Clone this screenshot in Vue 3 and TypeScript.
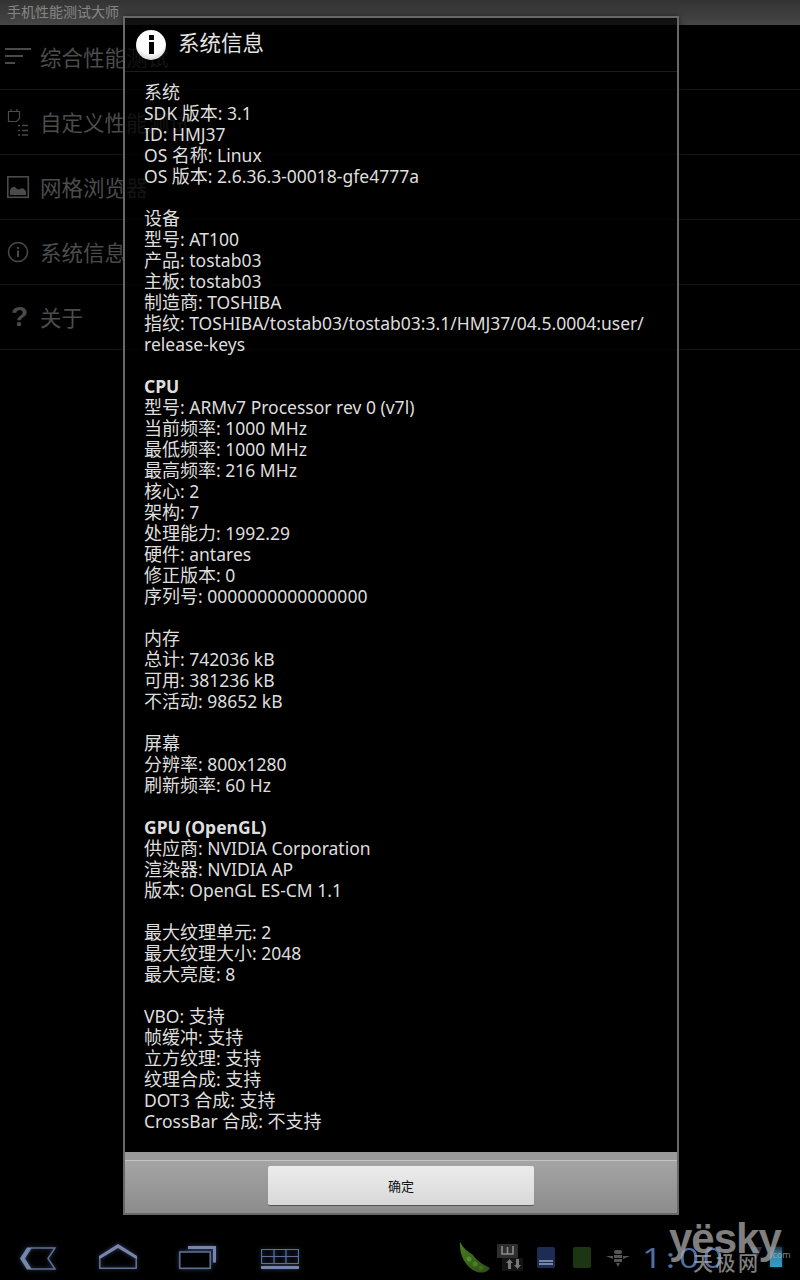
<script setup lang="ts">
interface Part { s: string; c: boolean }
interface Line { parts: Part[]; b: boolean }
const raw: string[] = [
  '系统','SDK 版本: 3.1','ID: HMJ37','OS 名称: Linux','OS 版本: 2.6.36.3-00018-gfe4777a','',
  '设备','型号: AT100','产品: tostab03','主板: tostab03','制造商: TOSHIBA','指纹: TOSHIBA/tostab03/tostab03:3.1/HMJ37/04.5.0004:user/','release-keys','',
  '*CPU','型号: ARMv7 Processor rev 0 (v7l)','当前频率: 1000 MHz','最低频率: 1000 MHz','最高频率: 216 MHz','核心: 2','架构: 7','处理能力: 1992.29','硬件: antares','修正版本: 0','序列号: 0000000000000000','',
  '内存','总计: 742036 kB','可用: 381236 kB','不活动: 98652 kB','',
  '屏幕','分辨率: 800x1280','刷新频率: 60 Hz','',
  '*GPU (OpenGL)','供应商: NVIDIA Corporation','渲染器: NVIDIA AP','版本: OpenGL ES-CM 1.1','',
  '最大纹理单元: 2','最大纹理大小: 2048','最大亮度: 8','',
  'VBO: 支持','帧缓冲: 支持','立方纹理: 支持','纹理合成: 支持','DOT3 合成: 支持','CrossBar 合成: 不支持'
]
function toLine(src: string): Line {
  const b = src.startsWith('*')
  const text = b ? src.slice(1) : src
  const chunks = text.match(/[\u4e00-\u9fff]+|[^\u4e00-\u9fff]+/g) ?? ['\u00a0']
  return { b, parts: chunks.map(s => ({ s, c: /[\u4e00-\u9fff]/.test(s) })) }
}
const lines: Line[] = raw.map(toLine)
const menu = ['综合性能测试','自定义性能测试','网格浏览器','系统信息','关于']
</script>

<template>
  <div class="screen">
    <div class="titlebar">手机性能测试大师</div>
    <ul class="menu">
      <li v-for="(m, i) in menu" :key="m" class="row">
        <span class="ico">
          <svg v-if="i === 0" width="30" height="20" viewBox="0 0 30 20" fill="#4a4a4a"><rect x="0" y="1" width="26" height="2"/><rect x="0" y="8" width="18" height="2"/><rect x="0" y="15" width="10" height="2"/></svg>
          <svg v-else-if="i === 1" width="30" height="30" viewBox="0 0 30 30" fill="none" stroke="#4a4a4a"><path d="M3.500 4.500h11v7l-3 3h-8zM6 2v2.500M12 2v2.500" stroke-width="1.200"/><path d="M13 18.500h2M17 18.500h6M13 23.500h2M17 23.500h6M13 28h2M17 28h6" stroke-width="1.500"/></svg>
          <svg v-else-if="i === 2" width="24" height="24" viewBox="0 0 24 24" class="ico-s"><rect x=".8" y="1.800" width="20.500" height="20.500" fill="none" stroke="#4a4a4a" stroke-width="1.600"/><path d="M3 20v-5c2-3.500 4-4 6-2s3 1.500 5 .5 4 1 5 3v3.500z" fill="#4a4a4a"/></svg>
          <svg v-else-if="i === 3" width="24" height="24" viewBox="0 0 24 24" fill="none" stroke="#4a4a4a" stroke-width="1.500" class="ico-s"><circle cx="11" cy="12" r="9.500"/><path d="M11 10.500v6.500M11 7v2" stroke-width="2"/></svg>
          <span v-else class="q">?</span>
        </span>
        <span class="label">{{ m }}</span>
      </li>
    </ul>

    <div class="dialog">
      <header class="dlg-head">
        <span class="info-badge"><i class="dot"></i><i class="stem"></i></span>
        <h1>系统信息</h1>
      </header>
      <div class="dlg-body">
        <div v-for="(l, i) in lines" :key="i" class="ln" :class="{ bold: l.b }"><span v-for="(p, j) in l.parts" :key="j" :class="{ cjk: p.c }">{{ p.s }}</span></div>
      </div>
      <div class="dlg-strip"></div>
      <footer class="dlg-foot">
        <button class="ok">确定</button>
      </footer>
    </div>

    <nav class="navbar">
      <div class="nav-left">
        <svg width="38" height="23" viewBox="0 0 38 23" fill="none" class="glow"><path d="M8 .5L1 11.500l7 11h5L6 11.500l7-11z" fill="#7586ae"/><path d="M12 1h24l-7 10.500 7 10.500H12" stroke="#5f7098" stroke-width="1.500"/></svg>
        <svg width="38" height="25" viewBox="0 0 38 25" fill="none" class="glow home"><path d="M0 12L19 0l19 12v3.500L19 4 0 15.500z" fill="#7586ae"/><path d="M.8 15v9.200h36.400V15" stroke="#5f7098" stroke-width="1.500"/></svg>
        <svg width="37" height="23" viewBox="0 0 37 23" fill="none" class="glow recent"><path d="M9 1.500h26.500v15" stroke="#7586ae" stroke-width="3"/><path d="M.8 6h30.400v16.200H.8z" fill="#000" stroke="#5f7098" stroke-width="1.500"/></svg>
        <svg width="38" height="20" viewBox="0 0 38 20" fill="none" class="glow grid"><path d="M.5.500h37v14H.5zM.5 7.500h37M13 .5v14M25 .5v14" stroke="#5f7098" stroke-width="1.200"/><rect y="17" width="38" height="3" fill="#7586ae"/></svg>
      </div>
      <div class="nav-right">
        <svg width="33" height="33" viewBox="0 0 33 33" class="pea">
          <defs><linearGradient id="podfill" x1="0" y1="0" x2="1" y2="1"><stop offset="0" stop-color="#4a7d25"/><stop offset="1" stop-color="#2a4c14"/></linearGradient></defs>
          <path d="M2 1C1 12 6 26 19 31c6 1.500 11 0 13-4-6-3-13-7-17-13C10 11 5 7 2 1z" fill="url(#podfill)"/>
          <circle cx="11" cy="18" r="2.500" fill="#558c2c"/><circle cx="17" cy="23" r="2.500" fill="#4a7d25"/><circle cx="23" cy="27" r="2.200" fill="#3f6b1f"/>
        </svg>
        <svg width="26" height="27" viewBox="0 0 26 27" class="usb"><rect x="0" y="0" width="21" height="14" rx="1" fill="#2e2e2e"/><rect x="5" y="14" width="21" height="13" rx="1" fill="#141414"/><path d="M5 2v8h11V2M10.500 3v7" fill="none" stroke="#8a8a8a" stroke-width="1.600"/><path d="M11 25v-6H9l3.500-4 3.500 4h-2v6zM19 15v6h-2l3.500 4 3.500-4h-2v-6z" fill="#777"/></svg>
        <span class="sd blue"><i></i><i></i></span>
        <span class="sd green"></span>
        <svg width="24" height="20" viewBox="0 0 24 20" class="bug" fill="#555"><rect x="8" y="2" width="8" height="4" rx="2"/><rect x="8" y="7" width="8" height="3"/><rect x="8" y="11" width="8" height="3"/><path d="M10 15h4l-2 4zM0 8h7v3zM24 8h-7v3zM9 2L8 0M15 2l1-2"/></svg>
        <span class="clock">1:00</span>
        <span class="wifi"></span>
        <span class="batt"></span>
      </div>
    </nav>

    <div class="mark">
      <span class="mark-en">yësky</span>
      <span class="mark-cn">天极网</span>
      <span class="mark-com">.com</span>
    </div>
  </div>
</template>

<style>
html, body { margin: 0; background: #000; }
</style>

<style scoped>
.screen {
  position: relative;
  width: 800px;
  height: 1280px;
  overflow: hidden;
  background: #000;
  font-family: "Noto Sans", "Noto Sans CJK SC", sans-serif;
  display: flex;
  flex-direction: column;
}
.titlebar {
  height: 25px;
  box-sizing: border-box;
  padding-left: 7px;
  font-size: 14px;
  line-height: 24px;
  color: #868686;
  background: linear-gradient(#333, #464646);
}
.menu { list-style: none; margin: 0; padding: 0; }
.row {
  height: 64px;
  border-bottom: 1px solid #161616;
  display: flex;
  align-items: center;
  padding-left: 5px;
  gap: 6px;
}
.ico { width: 30px; display: flex; align-items: center; justify-content: flex-start; }
.ico-s { margin-left: 2px; }
.q { font: bold 28px "Liberation Sans", sans-serif; color: #4a4a4a; margin-left: 6px; }
.label { font-size: 21.500px; color: #4c4c4c; margin: -2px 0 0 -1px; }

.dialog {
  position: absolute;
  left: 123px;
  top: 16px;
  width: 556px;
  height: 1199px;
  box-sizing: border-box;
  border: 2px solid #686868;
  background: rgba(0, 0, 0, .75);
  box-shadow: 0 0 6px rgba(0,0,0,.5);
  display: flex;
  flex-direction: column;
}
.dlg-head {
  height: 54px;
  flex: none;
  box-sizing: border-box;
  border-bottom: 1px solid #1c1c1c;
  display: flex;
  align-items: center;
  padding-left: 11px;
  gap: 12px;
}
.dlg-head h1 { margin: -6px 0 0; font-size: 21.500px; font-weight: 400; color: #e4e4e4; }
.info-badge {
  width: 30px; height: 30px; border-radius: 50%;
  background: radial-gradient(circle at 50% 30%, #fff 55%, #bbb);
  display: flex; flex-direction: column; align-items: center; justify-content: center; gap: 2px;
}
.dot { width: 5px; height: 5px; background: #000; }
.stem { width: 5px; height: 12px; background: #000; }
.dlg-body {
  flex: 1;
  padding: 10px 19px 0;
  font-size: 17.500px;
  line-height: 21px;
  color: #dedede;
}
.ln { white-space: nowrap; height: 21px; }
.cjk { font-size: 18px; line-height: 1; font-family: "Noto Sans CJK SC", sans-serif; }
.bold { font-weight: 700; }
.dlg-strip { height: 8px; flex: none; background: #999; }
.dlg-foot {
  height: 53px;
  flex: none;
  box-sizing: border-box;
  border-top: 1px solid #c4c4c4;
  background: linear-gradient(#a4a4a4, #8c8c8c);
  display: flex;
  justify-content: center;
  padding-top: 5px;
}
.ok {
  width: 266px;
  height: 40px;
  border: none;
  border-bottom: 1px solid #555;
  border-radius: 2px;
  background: linear-gradient(#ececec, #d8d8d8);
  font: 13px "Noto Sans CJK SC", sans-serif;
  color: #111;
}

.navbar {
  position: absolute;
  left: 0; right: 0; bottom: 0;
  height: 48px;
  display: flex;
  justify-content: space-between;
  align-items: flex-start;
}
.nav-left { display: flex; align-items: flex-start; padding: 15px 0 0 19px; gap: 42px; }
.glow { filter: drop-shadow(0 0 2px rgba(110,130,180,.55)); }
.home { margin-top: -3px; }
.recent { margin-top: -1px; }
.grid { margin-top: 2px; margin-left: 3px; }
.nav-right { display: flex; align-items: flex-start; padding: 9px 0 0; width: 343px; box-sizing: border-box; margin-left: auto; }
.pea { margin-left: 1px; }
.usb { margin: 3px 0 0 6px; }
.sd { width: 18px; height: 21px; margin-top: 6px; margin-left: 14px; border-radius: 2px; display: flex; flex-direction: column; justify-content: flex-end; gap: 1px; padding-bottom: 3px; box-sizing: border-box; }
.sd i { height: 2px; background: #7a84a0; margin: 0 2px; }
.blue { background: #1d2c55; }
.green { background: #1c3614; margin-left: 18px; }
.bug { margin: 7px 0 0 15px; }
.clock {
  font: 400 28px/30px "Noto Sans", sans-serif;
  color: #4f6ea6;
  margin: 1px 0 0 12px;
  letter-spacing: 3px;
  width: 108px;
  transform: scaleX(1.25);
  transform-origin: left center;
}
.wifi { width: 0; height: 0; border-left: 6px solid transparent; border-right: 6px solid transparent; border-top: 13px solid #27324a; margin: 6px 0 0; }
.batt { width: 12px; height: 20px; margin: 6px 0 0 8px; background: linear-gradient(#234, #38a 40%, #39c); box-shadow: 0 0 3px #246; }

.mark { position: absolute; left: 667px; top: 1218px; width: 125px; height: 60px; color: rgba(170,170,170,.75); pointer-events: none; }
.mark-en { position: absolute; left: 2px; top: -7px; font: bold 42px/56px "Liberation Sans", sans-serif; letter-spacing: -1px; }
.mark-cn { position: absolute; left: 26px; top: 31px; font: 500 20px/28px "Noto Sans CJK SC", sans-serif; letter-spacing: 2.500px; }
.mark-com { position: absolute; left: 103px; top: 31px; font: 9px/12px "Noto Sans", sans-serif; }
</style>
